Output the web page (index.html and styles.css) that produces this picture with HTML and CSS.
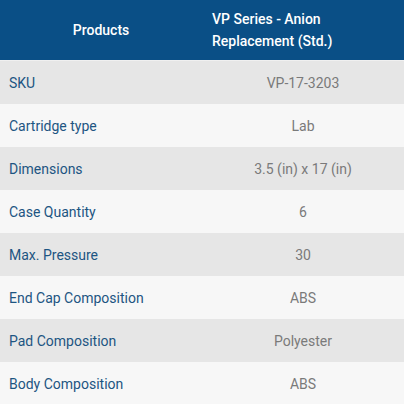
FILE: index.html
```html
<!DOCTYPE html>
<html lang="en">
<head>
    <meta charset="UTF-8">
    <meta name="viewport" content="width=device-width, initial-scale=1.0">
    <title>VP Series - Anion Replacement (Std.)</title>
    <link rel="stylesheet" href="styles.css">
</head>
<body>
    <table class="spec-table">
        <thead>
            <tr>
                <th class="col-products">Products</th>
                <th class="col-item">VP Series - Anion Replacement (Std.)</th>
            </tr>
        </thead>
        <tbody>
            <tr><td>SKU</td><td>VP-17-3203</td></tr>
            <tr><td>Cartridge type</td><td>Lab</td></tr>
            <tr><td>Dimensions</td><td>3.5 (in) x 17 (in)</td></tr>
            <tr><td>Case Quantity</td><td>6</td></tr>
            <tr><td>Max. Pressure</td><td>30</td></tr>
            <tr><td>End Cap Composition</td><td>ABS</td></tr>
            <tr><td>Pad Composition</td><td>Polyester</td></tr>
            <tr><td>Body Composition</td><td>ABS</td></tr>
        </tbody>
    </table>
</body>
</html>
```

FILE: styles.css
```css
html, body {
    margin: 0;
    padding: 0;
    background: #f7f7f7;
}
body {
    font-family: Roboto, "Liberation Sans", sans-serif;
    font-size: 14px;
}
.spec-table {
    width: 404px;
    border-collapse: collapse;
    table-layout: fixed;
}
.spec-table th {
    background: #0a4f86;
    color: #fff;
    font-weight: 500;
    height: 60px;
    line-height: 22px;
    padding: 0 10px;
    border-bottom: 1px solid #f0f0f0;
}
.spec-table .col-products {
    text-align: center;
}
.spec-table .col-item {
    text-align: left;
}
.spec-table td {
    height: 43px;
    padding: 0 9px;
    color: #1d5582;
}
.spec-table td + td {
    color: #7a7a7a;
    text-align: center;
}
.spec-table tbody tr:nth-child(odd) {
    background: #e6e6e6;
}
.spec-table tbody tr:nth-child(even) {
    background: #f7f7f7;
}
```
